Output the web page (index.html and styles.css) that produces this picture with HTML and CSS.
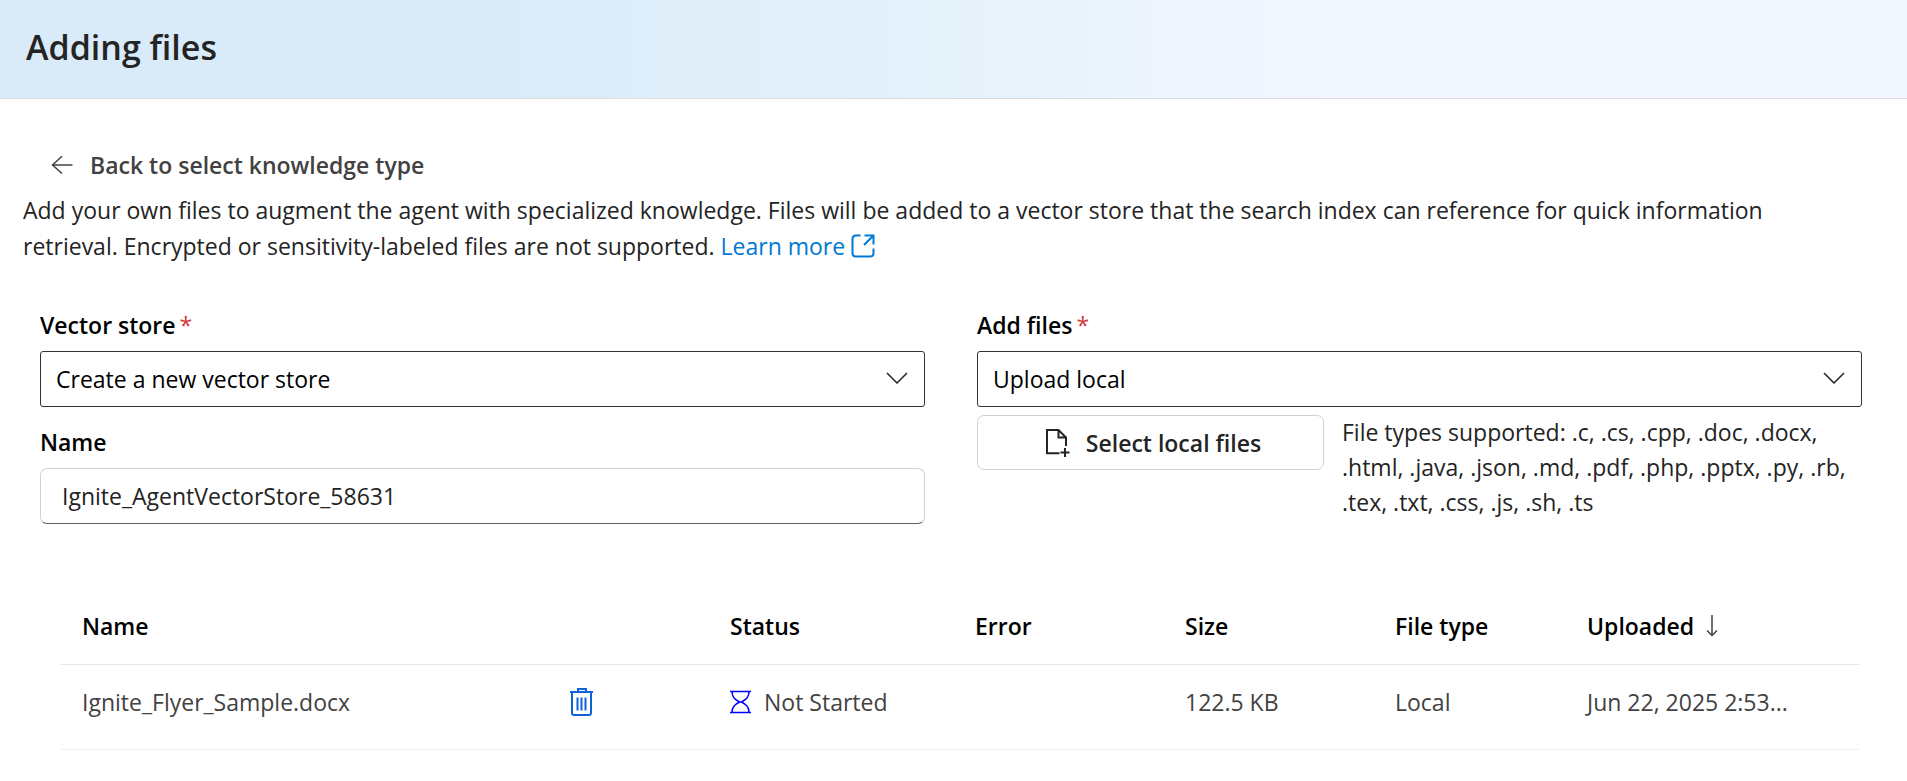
FILE: index.html
```html
<!DOCTYPE html>
<html lang="en">
<head>
<meta charset="utf-8">
<meta name="viewport" content="width=device-width, initial-scale=1">
<title>Adding files</title>
<link rel="stylesheet" href="styles.css">
</head>
<body>
<header class="header"><h1 class="title">Adding files</h1></header>
<main class="main">
  <button class="back" type="button">
    <svg class="icon-back" viewBox="0 0 24 24" aria-hidden="true"><path d="M22.5 12H2.5M12 3.2L2.5 12l9.500 8.500"/></svg>
    Back to select knowledge type
  </button>
  <p class="description">Add your own files to augment the agent with specialized knowledge. Files will be added to a vector store that the search index can reference for quick information retrieval. Encrypted or sensitivity-labeled files are not supported. <a class="link" href="#">Learn more<svg class="icon-open" viewBox="0 0 24 24" aria-hidden="true"><path d="M9.500 1.500H5Q1.500 1.500 1.500 5v14q0 3.500 3.500 3.500h14q3.500 0 3.500-3.500v-4.500M13.500 1.500h9v9M22.500 1.500l-9.500 9.500"/></svg></a></p>
  <form class="form">
    <div class="column">
      <div class="field">
        <label class="label" for="store">Vector store<span class="required">*</span></label>
        <div class="select-wrap">
          <select class="select" id="store"><option>Create a new vector store</option></select>
          <svg class="chevron" viewBox="0 0 22 12" aria-hidden="true"><path d="M1 1l10 10L21 1"/></svg>
        </div>
      </div>
      <div class="field name-field">
        <label class="label" for="name">Name</label>
        <input class="input" id="name" type="text" value="Ignite_AgentVectorStore_58631">
      </div>
    </div>
    <div class="column">
      <div class="field">
        <label class="label" for="source">Add files<span class="required">*</span></label>
        <div class="select-wrap">
          <select class="select" id="source"><option>Upload local</option></select>
          <svg class="chevron" viewBox="0 0 22 12" aria-hidden="true"><path d="M1 1l10 10L21 1"/></svg>
        </div>
      </div>
      <div class="upload">
        <button class="pick" type="button">
          <svg class="icon-file" viewBox="0 0 24 28" aria-hidden="true"><path d="M13.500 24.200H1V1h11.500l7.500 7.500v8.500M12.500 1v7.500H20M19 19v9M14.500 23.500h9"/></svg>
          Select local files
        </button>
        <p class="types">File types supported: .c, .cs, .cpp, .doc, .docx, .html, .java, .json, .md, .pdf, .php, .pptx, .py, .rb, .tex, .txt, .css, .js, .sh, .ts</p>
      </div>
    </div>
  </form>
  <table class="files">
    <colgroup><col class="c-name"><col class="c-action"><col class="c-status"><col class="c-error"><col class="c-size"><col class="c-type"><col class="c-date"></colgroup>
    <thead>
      <tr><th scope="col" colspan="2">Name</th><th scope="col">Status</th><th scope="col">Error</th><th scope="col">Size</th><th scope="col">File type</th><th scope="col">Uploaded<svg class="icon-sort" viewBox="0 0 12 22" aria-hidden="true"><path d="M6 0v20.500M1 15.500l5 5 5-5"/></svg></th></tr>
    </thead>
    <tbody>
      <tr>
        <td>Ignite_Flyer_Sample.docx</td>
        <td><button class="delete" type="button" aria-label="Delete file"><svg class="icon-trash" viewBox="0 0 24 28" aria-hidden="true"><path d="M0 4h23M8 4V1h8v3M2 4v21q0 2 2 2h15q2 0 2-2V4M7.500 9.500v13M11.500 9.500v13M15.500 9.500v13"/></svg></button></td>
        <td><svg class="icon-wait" viewBox="0 0 22 24" aria-hidden="true"><path d="M0 1.500h21M0 22.500h21M2 1.500c0 6 3 8 7.500 10.500-4.500 2.500-7.500 4.500-7.500 10.500M19 1.500c0 6-3 8-7.500 10.500 4.500 2.500 7.500 4.500 7.500 10.500"/></svg>Not Started</td>
        <td></td><td>122.5 KB</td><td>Local</td><td>Jun 22, 2025 2:53...</td>
      </tr>
    </tbody>
  </table>
</main>
</body>
</html>
```
FILE: styles.css
```css
* { box-sizing: border-box; }
body { margin: 0; background: #fff; color: #242424; font-family: "Open Sans", "Noto Sans", sans-serif; font-size: 23px; line-height: 36px; }
button, input, select { font: inherit; color: inherit; }
svg { fill: none; stroke: currentColor; stroke-width: 1.5; }
.header { padding: 22px 26px 26px; border-bottom: 1px solid #dcdcdc; background: linear-gradient(90deg, #d9ebf9 0%, #d9ebf9 25%, #e4f1fa 48%, #f3f7ff 70%, #f3f7ff 100%); }
.title { margin: 0; font-size: 34px; line-height: 50px; font-weight: 600; }
.main { padding: 48px 45px 30px 40px; }
.back { display: flex; align-items: center; gap: 16px; margin: 0; padding: 0 10px; border: 0; background: none; color: #424242; font-weight: 600; }
.icon-back { width: 24px; height: 24px; }
.description { margin: 9px 0 0 -17px; }
.link { color: #0078d4; text-decoration: none; }
.icon-open { width: 24px; height: 24px; margin-left: 6px; vertical-align: -3px; stroke-width: 2; }
.form { display: grid; grid-template-columns: 1fr 1fr; gap: 52px; margin-top: 43px; }
.field { display: flex; flex-direction: column; gap: 8px; }
.name-field { margin-top: 17px; }
.label { color: #000; font-weight: 600; }
.required { margin-left: 4px; color: #d13438; font-weight: 400; }
.select-wrap { position: relative; }
.select { display: block; appearance: none; width: 100%; height: 56px; padding: 0 48px 0 15px; border: 1px solid #333; border-radius: 3px; background: #fff; color: #000; }
.chevron { position: absolute; right: 17px; top: 21px; width: 22px; height: 12px; pointer-events: none; }
.input { width: 100%; height: 56px; padding: 0 21px; border: 1px solid #d1d1d1; border-bottom-color: #616161; border-radius: 7px; background: #fff; }
.upload { display: flex; align-items: flex-start; gap: 18px; margin-top: 8px; }
.pick { display: flex; flex: 0 0 347px; align-items: center; justify-content: center; gap: 16px; height: 55px; padding: 0 0 0 6px; border: 1px solid #d1d1d1; border-radius: 7px; background: #fff; font-weight: 600; }
.icon-file { width: 24px; height: 28px; stroke-width: 2; }
.types { margin: 0; line-height: 35px; }
.files { width: calc(100% - 24px); margin: 64px 0 0 21px; border-collapse: collapse; table-layout: fixed; color: #424242; }
.files th, .files td { padding: 0 0 0 21px; text-align: left; white-space: nowrap; border-bottom: 1px solid #e6e6e6; }
.files th { height: 76px; color: #000; font-weight: 600; }
.files td { height: 85px; padding-bottom: 9px; border-bottom-color: #f0f0f0; }
.c-name { width: 488px; }
.c-action { width: 160px; }
.c-status { width: 245px; }
.c-error, .c-size { width: 210px; }
.c-type { width: 192px; }
.delete { display: flex; padding: 0; border: 0; background: none; color: #0f62dc; }
.icon-trash { width: 24px; height: 28px; stroke-width: 2; }
.icon-wait { width: 22px; height: 24px; margin-right: 12px; vertical-align: -3px; color: #00f; }
.icon-sort { width: 12px; height: 22px; margin-left: 12px; vertical-align: -2px; color: #424242; }
```
